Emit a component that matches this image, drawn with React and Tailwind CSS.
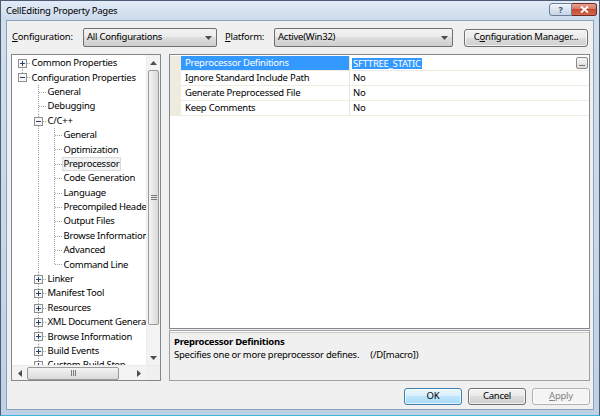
import React from 'react'

// tree rows: guides = vertical continuation per ancestor level, conn = own connector
const TREE = [
  { label: 'Common Properties', guides: [], conn: 'first', box: 'plus' },
  { label: 'Configuration Properties', guides: [], conn: 'end', box: 'minus' },
  { label: 'General', guides: [false], conn: 'mid' },
  { label: 'Debugging', guides: [false], conn: 'mid' },
  { label: 'C/C++', guides: [false], conn: 'mid', box: 'minus' },
  { label: 'General', guides: [false, true], conn: 'mid' },
  { label: 'Optimization', guides: [false, true], conn: 'mid' },
  { label: 'Preprocessor', guides: [false, true], conn: 'mid', selected: true },
  { label: 'Code Generation', guides: [false, true], conn: 'mid' },
  { label: 'Language', guides: [false, true], conn: 'mid' },
  { label: 'Precompiled Headers', guides: [false, true], conn: 'mid' },
  { label: 'Output Files', guides: [false, true], conn: 'mid' },
  { label: 'Browse Information', guides: [false, true], conn: 'mid' },
  { label: 'Advanced', guides: [false, true], conn: 'mid' },
  { label: 'Command Line', guides: [false, true], conn: 'end' },
  { label: 'Linker', guides: [false], conn: 'mid', box: 'plus' },
  { label: 'Manifest Tool', guides: [false], conn: 'mid', box: 'plus' },
  { label: 'Resources', guides: [false], conn: 'mid', box: 'plus' },
  { label: 'XML Document Generator', guides: [false], conn: 'mid', box: 'plus' },
  { label: 'Browse Information', guides: [false], conn: 'mid', box: 'plus' },
  { label: 'Build Events', guides: [false], conn: 'mid', box: 'plus' },
  { label: 'Custom Build Step', guides: [false], conn: 'mid', box: 'plus' },
  { label: 'Web Deployment', guides: [false], conn: 'end', box: 'plus' },
]

const PROPS = [
  { name: 'Preprocessor Definitions', value: 'SFTTREE_STATIC', selected: true },
  { name: 'Ignore Standard Include Path', value: 'No' },
  { name: 'Generate Preprocessed File', value: 'No' },
  { name: 'Keep Comments', value: 'No' },
]

const dot = { stroke: '#a0a0a0', strokeWidth: 1, strokeDasharray: '1 1' }

function TreeCell({ kind, box }) {
  const H = 14.4
  return (
    <svg width="16" height={H} viewBox={`0 0 16 ${H}`} className="block shrink-0">
      {(kind === 'guide' || kind === 'mid') && <line x1="7.5" y1="0" x2="7.5" y2={H} {...dot} />}
      {kind === 'end' && <line x1="7.5" y1="0" x2="7.5" y2="7.5" {...dot} />}
      {kind === 'first' && <line x1="7.5" y1="7.5" x2="7.5" y2={H} {...dot} />}
      {(kind === 'mid' || kind === 'end' || kind === 'first') && (
        <line x1="8" y1="7.5" x2="16" y2="7.5" {...dot} />
      )}
      {box && (
        <g>
          <rect x="3.5" y="3.5" width="8" height="8" fill="#f6f6f6" stroke="#8e8f8f" />
          <line x1="5" y1="7.5" x2="10" y2="7.5" stroke="#27406b" />
          {box === 'plus' && <line x1="7.5" y1="5" x2="7.5" y2="10" stroke="#27406b" />}
        </g>
      )}
    </svg>
  )
}

function TreeRow({ row }) {
  return (
    <div className="flex items-center h-[14.4px]">
      {row.guides.map((g, i) => (
        <TreeCell key={i} kind={g ? 'guide' : 'blank'} />
      ))}
      <TreeCell kind={row.conn} box={row.box} />
      <span
        className={`whitespace-nowrap leading-[12px] px-[1px] ${
          row.selected ? 'bg-[#f2f2f2] outline outline-[#dadada]' : ''
        }`}
      >
        {row.label}
      </span>
    </div>
  )
}

function Arrow({ dir }) {
  const pts = {
    up: '0,4 3.5,0 7,4',
    down: '0,0 3.5,4 7,0',
    left: '4,0 0,3.5 4,7',
    right: '0,0 4,3.5 0,7',
  }[dir]
  const vertical = dir === 'up' || dir === 'down'
  return (
    <svg width={vertical ? 7 : 4} height={vertical ? 4 : 7} className="block">
      <polygon points={pts} fill="#4d4d4d" />
    </svg>
  )
}

function Grip({ vertical }) {
  return vertical ? (
    <div className="flex flex-col gap-[1px]">
      <div className="w-[6px] h-[1px] bg-[#7a7a7a]" />
      <div className="w-[6px] h-[1px] bg-[#7a7a7a]" />
      <div className="w-[6px] h-[1px] bg-[#7a7a7a]" />
    </div>
  ) : (
    <div className="flex gap-[1px]">
      <div className="w-[1px] h-[6px] bg-[#7a7a7a]" />
      <div className="w-[1px] h-[6px] bg-[#7a7a7a]" />
      <div className="w-[1px] h-[6px] bg-[#7a7a7a]" />
    </div>
  )
}

function Combo({ width, text }) {
  return (
    <div
      className={`${width} h-[19px] flex items-center justify-between pl-[3px] pr-[4px] border border-[#707070] rounded-[2px] bg-[linear-gradient(to_bottom,#f2f2f2_0%,#ebebeb_50%,#dddddd_50%,#cfcfcf_100%)]`}
    >
      <span className="whitespace-nowrap">{text}</span>
      <Arrow dir="down" />
    </div>
  )
}

function Button({ children, kind }) {
  const styles = {
    default:
      'border-[#3c7fb1] bg-[linear-gradient(to_bottom,#eaf6fd_0%,#d9f0fc_50%,#bee6fd_50%,#a7d9f5_100%)] text-black',
    normal:
      'border-[#707070] bg-[linear-gradient(to_bottom,#f2f2f2_0%,#ebebeb_50%,#dddddd_50%,#cfcfcf_100%)] text-black',
    disabled: 'border-[#adb2b5] bg-[#f4f4f4] text-[#838383]',
  }[kind]
  return (
    <div
      className={`w-[58px] h-full flex items-center justify-center border rounded-[3px] shadow-[inset_0_0_0_1px_rgba(255,255,255,0.7)] ${styles}`}
    >
      {children}
    </div>
  )
}

export default function App() {
  return (
    <div className="w-[600px] h-[416px] flex flex-col border border-[#4b5d73] border-b-[#3fb6de] bg-[linear-gradient(to_bottom,#d2deec,#bfd1e7)] text-[9.5px] tracking-[-0.25px] text-black font-['Noto_Sans','Liberation_Sans',sans-serif] overflow-hidden">
      {/* title bar */}
      <div className="h-[19px] shrink-0 flex items-start justify-between pl-[5px] pr-[2px] bg-[linear-gradient(to_bottom,#e2ebf6,#ccdaec)]">
        <span className="leading-[19px] text-[#000]">CellEditing Property Pages</span>
        <div className="flex mt-[2px]">
          <div className="w-[23px] h-[13px] flex items-center justify-center border border-[#6d7f96] rounded-l-[3px] bg-[linear-gradient(to_bottom,#f0f5fb,#c6d4e6)]">
            <span className="text-[9px] leading-none font-bold text-[#3a4f6b]">?</span>
          </div>
          <div className="w-[25px] h-[13px] flex items-center justify-center border border-[#6e2a22] border-l-0 rounded-r-[3px] bg-[linear-gradient(to_bottom,#e8a493,#d4715e_50%,#c44a33_50%,#d16a4f)]">
            <svg width="9" height="7" viewBox="0 0 9 7" className="block">
              <path d="M1 0.5 L8 6.5 M8 0.5 L1 6.5" stroke="#fff" strokeWidth="1.8" />
            </svg>
          </div>
        </div>
      </div>

      {/* client area */}
      <div className="flex-1 mx-[5px] mb-[5px] border border-[#8da1ba] bg-[#f0f0f0] flex flex-col">
        {/* configuration row */}
        <div className="mt-[7px] h-[19px] pl-[5px] flex items-center">
          <span className="w-[71px] whitespace-nowrap">
            <span className="underline underline-offset-1">C</span>onfiguration:
          </span>
          <Combo width="w-[134px]" text="All Configurations" />
          <span className="ml-[8px] w-[49px] whitespace-nowrap">
            <span className="underline underline-offset-1">P</span>latform:
          </span>
          <Combo width="w-[179px]" text="Active(Win32)" />
          <div className="ml-[11px] w-[124px] h-[18px] flex items-center justify-center border border-[#707070] rounded-[3px] bg-[linear-gradient(to_bottom,#f2f2f2_0%,#ebebeb_50%,#dddddd_50%,#cfcfcf_100%)] shadow-[inset_0_0_0_1px_rgba(255,255,255,0.7)]">
            C<span className="underline underline-offset-1">o</span>nfiguration Manager...
          </div>
        </div>

        {/* main area */}
        <div className="mt-[7px] h-[327px] pl-[4px] pr-[3px] flex gap-[8px]">
          {/* tree */}
          <div className="w-[150px] h-full border border-[#828790] bg-white flex flex-col">
            <div className="flex-1 flex min-h-0">
              <div className="flex-1 min-w-0 overflow-hidden pt-[1px] pl-[2.5px]">
                {TREE.map((row, i) => (
                  <TreeRow key={i} row={row} />
                ))}
              </div>
              {/* vertical scrollbar */}
              <div className="w-[14px] flex flex-col bg-[#f3f3f3] border-l border-[#ececec]">
                <div className="h-[15px] flex items-center justify-center">
                  <Arrow dir="up" />
                </div>
                <div className="flex-1 flex flex-col">
                  <div className="h-[255px] mx-[1px] border border-[#9a9a9a] rounded-[2px] bg-[linear-gradient(to_right,#f4f4f4,#d9d9d9)] flex items-center justify-center">
                    <Grip vertical />
                  </div>
                </div>
                <div className="h-[15px] flex items-center justify-center">
                  <Arrow dir="down" />
                </div>
              </div>
            </div>
            {/* horizontal scrollbar */}
            <div className="h-[15px] flex bg-[#f3f3f3] border-t border-[#ececec]">
              <div className="w-[15px] flex items-center justify-center">
                <Arrow dir="left" />
              </div>
              <div className="flex-1 flex items-center">
                <div className="w-[92px] h-[13px] border border-[#9a9a9a] rounded-[2px] bg-[linear-gradient(to_bottom,#f4f4f4,#d9d9d9)] flex items-center justify-center">
                  <Grip />
                </div>
              </div>
              <div className="w-[15px] flex items-center justify-center">
                <Arrow dir="right" />
              </div>
              <div className="w-[14px] bg-[#f0f0f0]" />
            </div>
          </div>

          {/* property grid + description */}
          <div className="flex-1 h-full flex flex-col gap-[1px]">
            <div className="h-[275px] border border-[#828790] bg-white pt-[1px] flex flex-col">
              {PROPS.map((p, i) => (
                <div key={i} className="h-[15px] flex border-b border-[#f0ecdf]">
                  <div className="w-[11px] bg-[#efebde]" />
                  <div
                    className={`w-[169px] pl-[4px] border-r border-[#ece7d8] leading-[14px] whitespace-nowrap ${
                      p.selected ? 'bg-[#3399ff] text-white' : ''
                    }`}
                  >
                    {p.name}
                  </div>
                  <div className="flex-1 flex items-center pl-[2px] pr-[1px]">
                    {p.selected ? (
                      <>
                        <span className="bg-[#3399ff] text-white leading-[11px] px-[1px]">{p.value}</span>
                        <div className="ml-auto w-[12px] h-[12px] border border-[#8a8a8a] rounded-[2px] bg-[linear-gradient(to_bottom,#f6f6f6,#dcdcdc)] flex items-end justify-center pb-[1px]">
                          <span className="text-[7px] leading-[6px] font-bold tracking-normal">...</span>
                        </div>
                      </>
                    ) : (
                      <span className="pl-[1px] leading-[14px]">{p.value}</span>
                    )}
                  </div>
                </div>
              ))}
            </div>
            <div className="flex-1 border border-[#a0a0a0] bg-[#f0f0f0] shadow-[inset_0_1px_0_#ffffff,inset_0_2px_0_#c9c9c9] pt-[4px] pl-[4px]">
              <div className="font-bold leading-[13px]">Preprocessor Definitions</div>
              <div className="leading-[13px] whitespace-pre">
                Specifies one or more preprocessor defines.{'     '}(/D[macro])
              </div>
            </div>
          </div>
        </div>

        {/* buttons */}
        <div className="mt-[7px] h-[17px] pr-[3px] flex justify-end gap-[6px]">
          <Button kind="default">OK</Button>
          <Button kind="normal">Cancel</Button>
          <Button kind="disabled">
            <span>
              <span className="underline underline-offset-1">A</span>pply
            </span>
          </Button>
        </div>
      </div>
    </div>
  )
}
